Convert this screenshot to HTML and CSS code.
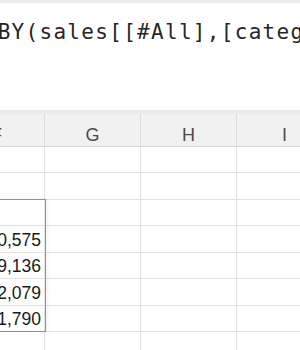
FILE: index.html
```html
<!DOCTYPE html>
<html lang="en">
<head>
    <meta charset="UTF-8">
    <meta name="viewport" content="width=device-width, initial-scale=1.0">
    <title>Sheet</title>
    <link rel="stylesheet" href="styles.css">
</head>
<body>
    <div class="formula-bar">
        <div class="formula-text">=GROUPBY(sales[[#All],[category]],sales[[#All],[amount]],SUM,3)</div>
    </div>

    <div class="sheet">
        <div class="col-head">F</div>
        <div class="col-head">G</div>
        <div class="col-head">H</div>
        <div class="col-head">I</div>

        <div class="cell"></div><div class="cell"></div><div class="cell"></div><div class="cell"></div>
        <div class="cell"></div><div class="cell"></div><div class="cell"></div><div class="cell"></div>
        <div class="cell"></div><div class="cell"></div><div class="cell"></div><div class="cell"></div>
        <div class="cell num">30,575</div><div class="cell"></div><div class="cell"></div><div class="cell"></div>
        <div class="cell num">19,136</div><div class="cell"></div><div class="cell"></div><div class="cell"></div>
        <div class="cell num">12,079</div><div class="cell"></div><div class="cell"></div><div class="cell"></div>
        <div class="cell num">11,790</div><div class="cell"></div><div class="cell"></div><div class="cell"></div>
        <div class="cell"></div><div class="cell"></div><div class="cell"></div><div class="cell"></div>

        <div class="selection"></div>
    </div>
</body>
</html>
```

FILE: styles.css
```css
body {
    margin: 0;
    width: 300px;
    height: 350px;
    overflow: hidden;
    background-color: #ffffff;
    font-family: "Liberation Sans", Arial, sans-serif;
}
.formula-bar {
    height: 107px;
    border-top: 3px solid #ebebeb;
    border-bottom: 4px solid #ebebeb;
    overflow: hidden;
    white-space: nowrap;
}
.formula-text {
    margin-left: -86px;
    padding-top: 16px;
    font-family: "DejaVu Sans Mono", monospace;
    font-size: 21px;
    line-height: 26px;
    letter-spacing: 1.3px;
    color: #262626;
}
.sheet {
    position: relative;
    display: grid;
    grid-template-columns: repeat(4, 96px);
    grid-template-rows: 33px;
    grid-auto-rows: 26.43px;
    margin-left: -51px;
}
.col-head {
    background-color: #f1f1f1;
    border-right: 1px solid #dcdcdc;
    border-bottom: 1px solid #d6d6d6;
    text-align: center;
    font-size: 18px;
    line-height: 20px;
    padding-top: 11px;
    color: #4a4a4a;
}
.cell {
    border-right: 1px solid #e3e3e3;
    border-bottom: 1px solid #e3e3e3;
    display: flex;
    align-items: flex-end;
    justify-content: flex-end;
    padding: 0 3px 2px 0;
    font-size: 17.5px;
    line-height: 20px;
    color: #1a1a1a;
}
.selection {
    position: absolute;
    left: 0;
    width: 95px;
    top: 85px;
    height: 131px;
    border: 1px solid #6f95e0;
    box-shadow: 2px 0 5px rgba(0, 0, 0, 0.05);
    pointer-events: none;
}
```
